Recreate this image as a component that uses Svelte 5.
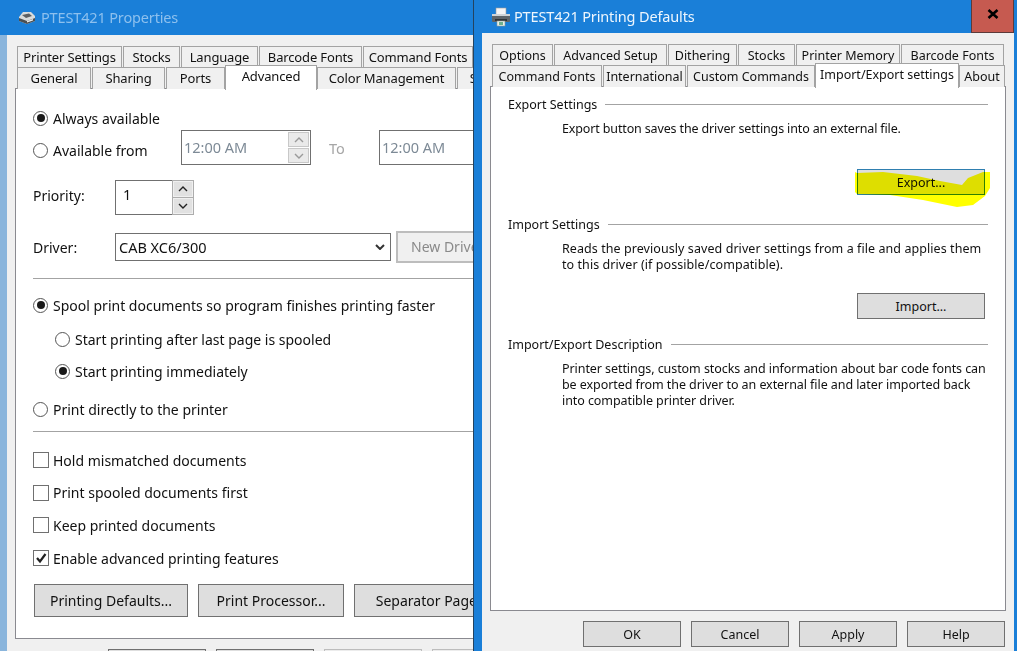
<script>
	const backRowA = [
		['Printer Settings', 105], ['Stocks', 57], ['Language', 77], ['Barcode Fonts', 103], ['Command Fonts', 110]
	]
	const backRowB = [
		['General', 74, false], ['Sharing', 73, false], ['Ports', 59, false], ['Advanced', 92, true],
		['Color Management', 139, false], ['Separator', 84, false]
	]
	const frontRowA = [
		['Options', 61], ['Advanced Setup', 113], ['Dithering', 69], ['Stocks', 57], ['Printer Memory', 104], ['Barcode Fonts', 103]
	]
	const frontRowB = [
		['Command Fonts', 110], ['International', 83], ['Custom Commands', 128], ['Import/Export settings', 144, true], ['About', 46]
	]
</script>

<div class="desktop">
	<!-- Back window -->
	<section class="window back">
		<header class="title back-title">
			<svg class="icon-small" viewBox="0 0 18 14" width="18" height="14">
				<path d="M5 1 L13 1 L17 5 L17 10 L9 13 L1 10 L1 6 Z" fill="#d8dcdc" />
				<path d="M1 7 L9 10 L17 7 L17 10 L9 13 L1 10 Z" fill="#4b4f52" />
				<path d="M4 4 L11 2.5 L14 5 L8 7 Z" fill="#5c6063" />
				<path d="M9 10 L15 8 L15 9.5 L9 11.5 Z" fill="#e8eaea" />
			</svg>
			<span>PTEST421 Properties</span>
		</header>
		<div class="client back-client">
			<div class="tabs back-tabs">
				<div class="tab-row">
					{#each backRowA as [label, w]}
						<div class="tab" style="width: {w}px">{label}</div>
					{/each}
				</div>
				<div class="tab-row second">
					{#each backRowB as [label, w, on]}
						<div class="tab" class:on style="width: {w}px">{label}</div>
					{/each}
				</div>
			</div>
			<div class="panel back-panel">
				<div class="line first">
					<span class="radio checked"></span><span>Always available</span>
				</div>
				<div class="line avail">
					<div class="avail-label"><span class="radio"></span><span>Available from</span></div>
					<div class="time">
						<span>12:00 AM</span>
						<div class="spin">
							<span class="spin-btn"><svg viewBox="0 0 10 6" width="10" height="6"><path d="M1 5 L5 1 L9 5" /></svg></span>
							<span class="spin-btn"><svg viewBox="0 0 10 6" width="10" height="6"><path d="M1 1 L5 5 L9 1" /></svg></span>
						</div>
					</div>
					<span class="to">To</span>
					<div class="time second-time"><span>12:00 AM</span></div>
				</div>
				<div class="line priority">
					<span class="field-label priority-label">Priority:</span>
					<div class="number">1</div>
					<div class="number-spin">
						<span class="spin-btn"><svg viewBox="0 0 10 6" width="10" height="6"><path d="M1 5 L5 1 L9 5" /></svg></span>
						<span class="spin-btn"><svg viewBox="0 0 10 6" width="10" height="6"><path d="M1 1 L5 5 L9 1" /></svg></span>
					</div>
				</div>
				<div class="line driver">
					<span class="field-label">Driver:</span>
					<div class="select">
						<span>CAB XC6/300</span>
						<svg viewBox="0 0 10 6" width="10" height="6"><path d="M1 1 L5 5 L9 1" /></svg>
					</div>
					<div class="new-driver">New Driver...</div>
				</div>
				<hr class="rule rule-a" />
				<div class="line spool"><span class="radio checked"></span><span>Spool print documents so program finishes printing faster</span></div>
				<div class="line after indent"><span class="radio"></span><span>Start printing after last page is spooled</span></div>
				<div class="line now indent"><span class="radio checked"></span><span>Start printing immediately</span></div>
				<div class="line direct"><span class="radio"></span><span>Print directly to the printer</span></div>
				<hr class="rule rule-b" />
				<div class="line check-a"><span class="check"></span><span>Hold mismatched documents</span></div>
				<div class="line check-b"><span class="check"></span><span>Print spooled documents first</span></div>
				<div class="line check-b"><span class="check"></span><span>Keep printed documents</span></div>
				<div class="line check-b">
					<span class="check">
						<svg viewBox="0 0 14 14" width="14" height="14"><path d="M3 7 L6 10.5 L11.5 3" /></svg>
					</span>
					<span>Enable advanced printing features</span>
				</div>
				<div class="panel-buttons">
					<div class="btn b1">Printing Defaults...</div>
					<div class="btn b2">Print Processor...</div>
					<div class="btn b3">Separator Page...</div>
				</div>
			</div>
			<div class="back-footer">
				<div class="btn foot"></div>
				<div class="btn foot"></div>
				<div class="btn foot off"></div>
				<div class="btn foot off"></div>
			</div>
		</div>
	</section>

	<!-- Front window -->
	<section class="window front">
		<header class="title front-title">
			<svg class="icon-large" viewBox="0 0 20 20" width="20" height="20">
				<rect x="5" y="1" width="10" height="7" fill="#f4f4f4" stroke="#9a9a9a" stroke-width="0.6" />
				<rect x="1" y="8" width="18" height="7" rx="1" fill="#5e6468" />
				<rect x="1" y="7" width="18" height="2" fill="#cfd3d6" />
				<rect x="4" y="12" width="12" height="2" fill="#2f3336" />
				<rect x="6" y="14" width="8" height="5" fill="#e8f0ea" stroke="#8a9a94" stroke-width="0.6" />
				<rect x="8" y="15" width="4" height="3" fill="#6fb08e" />
			</svg>
			<span>PTEST421 Printing Defaults</span>
			<div class="close"><svg viewBox="0 0 12 10" width="12" height="10"><path d="M1.5 1 L10.5 9 M10.5 1 L1.5 9" /></svg></div>
		</header>
		<div class="client front-client">
			<div class="tabs front-tabs">
				<div class="tab-row">
					{#each frontRowA as [label, w]}
						<div class="tab" style="width: {w}px">{label}</div>
					{/each}
				</div>
				<div class="tab-row second">
					{#each frontRowB as [label, w, on]}
						<div class="tab" class:on style="width: {w}px">{label}</div>
					{/each}
				</div>
			</div>
			<div class="panel front-panel">
				<div class="group-title"><span>Export Settings</span><i></i></div>
				<p class="group-text tight">Export button saves the driver settings into an external file.</p>
				<div class="group-action export-row">
					<div class="btn action default">Export...</div>
					<!-- Marker scribble over the Export button -->
					<svg class="marker" viewBox="0 0 135 40" width="135" height="40">
						<path d="M0 3 L2 4 L28 3 L62 7 L85 12 L107 16 L113 9 L128 3 L135 3 L135 19 L130 27 L118 36 L102 38 L68 31 L35 26 L2 25 L0 23 Z" />
					</svg>
				</div>
				<div class="group-title import"><span>Import Settings</span><i></i></div>
				<p class="group-text loose">Reads the previously saved driver settings from a file and applies them<br />to this driver (if possible/compatible).</p>
				<div class="group-action import-row"><div class="btn action">Import...</div></div>
				<div class="group-title describe"><span>Import/Export Description</span><i></i></div>
				<p class="group-text slight">Printer settings, custom stocks and information about bar code fonts can<br />be exported from the driver to an external file and later imported back<br />into compatible printer driver.</p>
			</div>
			<div class="front-footer">
				<div class="btn dlg">OK</div>
				<div class="btn dlg">Cancel</div>
				<div class="btn dlg">Apply</div>
				<div class="btn dlg">Help</div>
			</div>
		</div>
	</section>
</div>

<style>
	:global(body) {
		margin: 0;
		background: #1a7fd8;
	}

	.desktop {
		position: relative;
		width: 1017px;
		height: 651px;
		overflow: hidden;
		font-family: 'Noto Sans', sans-serif;
		color: #111;
	}

	.window {
		position: absolute;
		top: 0;
		height: 651px;
		box-sizing: border-box;
		overflow: hidden;
		background: #1a7fd8;
		white-space: nowrap;
	}

	.back {
		left: 0;
		width: 473px;
		font-size: 14px;
	}

	.front {
		left: 473px;
		width: 544px;
		border-left: 1px solid #24435f;
		font-size: 12.5px;
	}

	.title {
		display: flex;
		align-items: center;
		font-size: 14.5px;
		letter-spacing: -0.15px;
	}

	.back-title {
		height: 35px;
		padding-left: 18px;
		color: #8dc0ee;
	}

	.back-title span {
		margin-left: 5px;
		margin-top: -2px;
	}

	.front-title {
		position: relative;
		height: 33px;
		padding-left: 17px;
		color: #eef6fd;
	}

	.front-title span {
		margin-left: 3px;
		margin-top: -2px;
	}

	.close {
		position: absolute;
		left: 497px;
		top: 0;
		width: 43px;
		height: 33px;
		box-sizing: border-box;
		display: flex;
		align-items: center;
		justify-content: center;
		padding-bottom: 4px;
		background: #c65a50;
		border: 1px solid #5c3a3a;
		border-top: 0;
	}

	.close path {
		stroke: #000;
		stroke-width: 2.6;
		fill: none;
	}

	.client {
		background: #f0f0f0;
		height: 616px;
	}

	.back-client {
		margin-left: 7px;
		padding-left: 8px;
		box-shadow: -7px 0 0 #8ab5dc;
		padding-top: 11px;
		box-sizing: border-box;
	}

	.front-client {
		margin-left: 8px;
		margin-right: 3px;
		height: 618px;
		padding: 11px 0 0 8px;
		box-sizing: border-box;
	}

	.tabs {
		position: relative;
		z-index: 1;
	}

	.tab-row {
		display: flex;
		gap: 1px;
		height: 21px;
	}

	.back-tabs {
		padding-left: 2px;
		font-size: 13px;
		letter-spacing: -0.15px;
	}

	.front-tabs {
		padding-left: 2px;
	}

	.tab {
		flex: none;
		box-sizing: border-box;
		height: 21px;
		line-height: 20px;
		text-align: center;
		background: #f0f0f0;
		border: 1px solid #a3a3a3;
		border-bottom: 0;
	}

	.front-tabs .tab {
		line-height: 22px;
	}

	.second .tab {
		height: 22px;
	}

	.tab.on {
		position: relative;
		top: -2px;
		height: 25px;
		background: #fff;
		margin: 0 -1px 0 -1px;
		border-color: #a3a3a3;
	}

	.back-tabs .tab.on,
	.front-tabs .tab.on {
		line-height: 21px;
	}

	.panel {
		box-sizing: border-box;
		background: #fff;
		border: 1px solid #8a8a90;
		overflow: hidden;
	}

	.back-panel {
		width: 520px;
		height: 551px;
		padding: 19px 0 0 17px;
	}

	.line {
		display: flex;
		align-items: center;
		height: 20px;
	}

	.radio {
		flex: none;
		box-sizing: border-box;
		position: relative;
		width: 15px;
		height: 15px;
		margin-right: 5px;
		border: 1px solid #555;
		border-radius: 50%;
		background: #fff;
	}

	.radio.checked::after {
		content: '';
		position: absolute;
		left: 2.5px;
		top: 2.5px;
		width: 8px;
		height: 8px;
		border-radius: 50%;
		background: #1a1a1a;
	}

	.check {
		flex: none;
		box-sizing: border-box;
		display: flex;
		width: 16px;
		height: 16px;
		margin-right: 4px;
		border: 1px solid #707070;
		background: #fff;
	}

	.check path {
		fill: none;
		stroke: #222;
		stroke-width: 2.2;
	}

	.avail {
		height: 35px;
		margin-top: 2px;
	}

	.avail-label {
		display: flex;
		flex: none;
		align-items: center;
		width: 148px;
		margin-top: 5px;
	}

	.time {
		display: flex;
		flex: none;
		align-items: center;
		justify-content: space-between;
		box-sizing: border-box;
		width: 130px;
		height: 35px;
		padding: 0 1px 0 2px;
		border: 1px solid #707070;
		color: #7d8a96;
		font-size: 14.5px;
	}

	.time > span {
		margin-top: -2px;
	}

	.time .spin {
		display: flex;
		flex-direction: column;
		gap: 1px;
	}

	.spin-btn {
		display: flex;
		align-items: center;
		justify-content: center;
		box-sizing: border-box;
		width: 21px;
		height: 15px;
		background: #eaeaea;
		border: 1px solid #c8c8c8;
	}

	.spin-btn path,
	.select path {
		fill: none;
		stroke: #9a9a9a;
		stroke-width: 1.4;
	}

	.to {
		flex: none;
		margin: 1px 0 0 18px;
		width: 50px;
		color: #a6a6a6;
		font-size: 14.5px;
	}

	.second-time {
		width: 160px;
	}

	.priority {
		height: 35px;
		margin-top: 15px;
	}

	.field-label {
		width: 82px;
	}

	.priority-label {
		margin-top: -5px;
	}

	.number {
		box-sizing: border-box;
		width: 57px;
		height: 35px;
		padding: 3px 0 0 7px;
		border: 1px solid #707070;
		border-right: 0;
		font-size: 14.5px;
	}

	.number-spin {
		display: flex;
		flex-direction: column;
		gap: 1px;
		box-sizing: border-box;
		height: 35px;
		padding: 1px;
		background: #adadad;
	}

	.number-spin .spin-btn {
		width: 20px;
		height: 16px;
		background: #e1e1e1;
		border: 1px solid #f0f0f0;
	}

	.number-spin path {
		stroke: #222;
	}

	.driver {
		height: 32px;
		margin-top: 16px;
	}

	.select {
		display: flex;
		align-items: center;
		justify-content: space-between;
		box-sizing: border-box;
		width: 276px;
		height: 28px;
		padding: 0 5px 0 3px;
		border: 1px solid #707070;
		font-size: 14.5px;
	}

	.select path {
		stroke: #333;
		stroke-width: 2;
	}

	.new-driver {
		box-sizing: border-box;
		width: 130px;
		height: 32px;
		line-height: 28px;
		margin-left: 5px;
		padding-left: 13px;
		background: #f0f0f0;
		border: 2px solid #bdbdbd;
		color: #8a8a8a;
	}

	.rule {
		height: 1px;
		margin: 0;
		border: 0;
		background: #a3a3a3;
	}

	.rule-a {
		margin-top: 15px;
	}

	.spool {
		margin-top: 16px;
	}

	.indent {
		padding-left: 22px;
	}

	.after {
		margin-top: 14px;
	}

	.now {
		margin-top: 12px;
	}

	.direct {
		margin-top: 18px;
	}

	.rule-b {
		margin-top: 12px;
	}

	.check-a {
		margin-top: 18px;
	}

	.check-b {
		margin-top: 12.7px;
	}

	.panel-buttons {
		display: flex;
		gap: 10px;
		margin: 16px 0 0 1px;
	}

	.btn {
		flex: none;
		box-sizing: border-box;
		display: flex;
		align-items: center;
		justify-content: center;
		background: #dedede;
		border: 1px solid #707070;
	}

	.b1 {
		width: 154px;
		height: 33px;
	}

	.b2 {
		width: 146px;
		height: 33px;
	}

	.b3 {
		width: 156px;
		height: 33px;
	}

	.back-footer {
		display: flex;
		gap: 10px;
		margin: 10px 0 0 93px;
	}

	.foot {
		width: 98px;
		height: 30px;
	}

	.foot.off {
		background: #ececec;
		border-color: #bdbdbd;
	}

	.front-panel {
		width: 516px;
		height: 525px;
		padding: 8px 17px 0 17px;
	}

	.group-title {
		display: flex;
		align-items: center;
		height: 18px;
	}

	.group-title i {
		flex: 1;
		height: 1px;
		margin-left: 8px;
		background: #a3a3a3;
	}

	.group-text {
		margin: 8px 0 0 54px;
		line-height: 16px;
	}

	.tight {
		letter-spacing: -0.14px;
	}

	.loose {
		letter-spacing: 0.07px;
	}

	.slight {
		letter-spacing: -0.07px;
	}

	.group-action {
		position: relative;
		display: flex;
		justify-content: flex-end;
		padding-right: 3px;
	}

	.export-row {
		margin-top: 32px;
	}

	.import-row {
		margin-top: 20px;
	}

	.action {
		width: 128px;
		height: 26px;
	}

	.default {
		border-color: #2f7fb0;
	}

	.marker {
		position: absolute;
		right: -2px;
		top: 0;
		mix-blend-mode: multiply;
	}

	.marker path {
		fill: #ffff00;
	}

	.import {
		margin-top: 20px;
	}

	.describe {
		margin-top: 16px;
	}

	.front-footer {
		display: flex;
		gap: 10px;
		justify-content: flex-end;
		margin: 10px 9px 0 0;
	}

	.dlg {
		width: 98px;
		height: 26px;
	}
</style>
